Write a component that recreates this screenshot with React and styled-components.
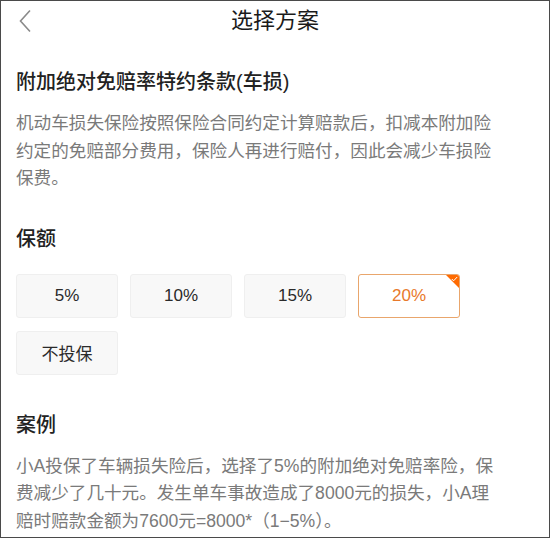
import React, { useState } from 'react';
import styled, { createGlobalStyle } from 'styled-components';

const GlobalStyle = createGlobalStyle`
  html, body {
    margin: 0;
    padding: 0;
    background: #fff;
  }
  body {
    font-family: "Liberation Sans", "Noto Sans CJK SC", sans-serif;
  }
`;

const Page = styled.div`
  width: 550px;
  height: 538px;
  box-sizing: border-box;
  border: 1px solid #4a4a4a;
  background: #fff;
  overflow: hidden;
`;

const NavBar = styled.div`
  position: relative;
  height: 40px;
  display: flex;
  align-items: center;
  justify-content: center;
`;

const BackButton = styled.button`
  position: absolute;
  left: 14px;
  top: 6px;
  width: 20px;
  height: 28px;
  padding: 0;
  border: none;
  background: none;
  display: flex;
  align-items: center;
  justify-content: center;
  cursor: pointer;
`;

const Title = styled.h1`
  margin: 0;
  font-size: 22px;
  font-weight: 400;
  color: #1a1a1a;
  line-height: 40px;
`;

const Content = styled.div`
  padding: 0 15px;
`;

const Heading = styled.h2`
  margin: ${(p) => p.$top || 0}px 0 0;
  font-size: 20px;
  font-weight: 500;
  color: #222;
  line-height: 30px;
`;

const Paragraph = styled.p`
  margin: ${(p) => p.$top || 0}px 0 0;
  width: 488px;
  font-size: 17.6px;
  line-height: 27.5px;
  color: #7a7a7a;
`;

const OptionGrid = styled.div`
  margin-top: 20px;
  display: grid;
  grid-template-columns: repeat(4, 102px);
  column-gap: 12px;
  row-gap: 13px;
`;

const Option = styled.button`
  position: relative;
  height: 44px;
  box-sizing: border-box;
  border: 1px solid ${(p) => (p.$active ? '#e9a66c' : '#efefef')};
  border-radius: 3px;
  background: ${(p) => (p.$active ? '#fff' : '#f8f8f8')};
  color: ${(p) => (p.$active ? '#e8792b' : '#2a2a2a')};
  font-family: inherit;
  font-size: 17px;
  padding: 0;
  cursor: pointer;
  overflow: hidden;
`;

const Corner = styled.span`
  position: absolute;
  top: -1px;
  right: -1px;
  width: 0;
  height: 0;
  border-top: 15px solid #ff6a00;
  border-left: 15px solid transparent;
`;

const Check = styled.svg`
  position: absolute;
  top: 1px;
  right: 1px;
`;

const options = ['5%', '10%', '15%', '20%', '不投保'];

const App = () => {
  const [selected, setSelected] = useState('20%');

  return (
    <>
      <GlobalStyle />
      <Page>
        <NavBar>
          <BackButton aria-label="返回">
            <svg width="14" height="24" viewBox="0 0 14 24">
              <path d="M12 1.5 L2.5 12 L12 22.5" fill="none" stroke="#8a8a8a" strokeWidth="1.6" />
            </svg>
          </BackButton>
          <Title>选择方案</Title>
        </NavBar>
        <Content>
          <Heading $top={26}>附加绝对免赔率特约条款(车损)</Heading>
          <Paragraph $top={13}>
            机动车损失保险按照保险合同约定计算赔款后，扣减本附加险约定的免赔部分费用，保险人再进行赔付，因此会减少车损险保费。
          </Paragraph>
          <Heading $top={31}>保额</Heading>
          <OptionGrid>
            {options.map((o) => (
              <Option key={o} $active={selected === o} onClick={() => setSelected(o)}>
                {o}
                {selected === o && (
                  <>
                    <Corner />
                    <Check width="7" height="6" viewBox="0 0 7 6">
                      <path d="M0.8 3 L2.6 4.8 L6.2 1" fill="none" stroke="#fff" strokeWidth="1" />
                    </Check>
                  </>
                )}
              </Option>
            ))}
          </OptionGrid>
          <Heading $top={35}>案例</Heading>
          <Paragraph $top={13}>
            小A投保了车辆损失险后，选择了5%的附加绝对免赔率险，保费减少了几十元。发生单车事故造成了8000元的损失，小A理赔时赔款金额为7600元=8000*（1−5%）。
          </Paragraph>
        </Content>
      </Page>
    </>
  );
};

export default App;
